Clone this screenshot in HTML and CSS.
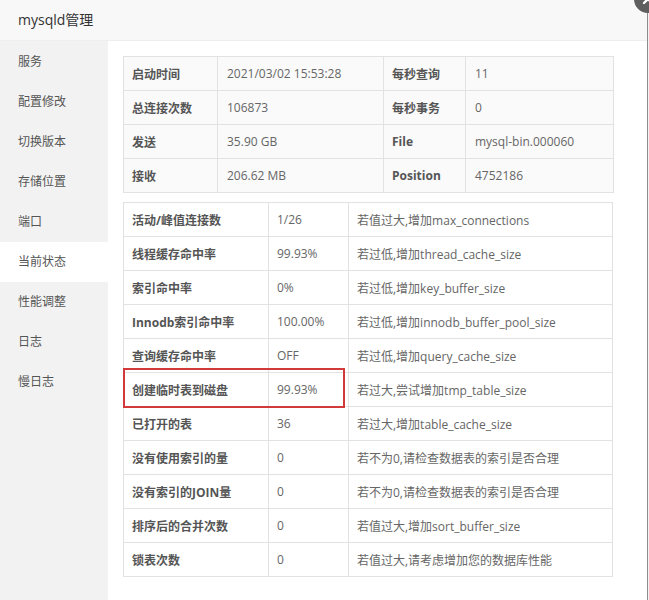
FILE: index.html
```html
<!DOCTYPE html>
<html>
<head>
<meta charset="utf-8">
<link rel="stylesheet" href="styles.css">
</head>
<body>
<div class="dialog">
  <div class="header">mysqld管理</div>
  <div class="close"><svg width="28" height="28" viewBox="0 0 28 28"><circle cx="14" cy="14" r="14" fill="#5f5f5f"/><path d="M10 10 L18 18 M18 10 L10 18" stroke="#fff" stroke-width="2.4" stroke-linecap="round"/></svg></div>
  <div class="main">
    <ul class="side">
      <li>服务</li>
      <li>配置修改</li>
      <li>切换版本</li>
      <li>存储位置</li>
      <li>端口</li>
      <li class="active">当前状态</li>
      <li>性能调整</li>
      <li>日志</li>
      <li>慢日志</li>
    </ul>
    <div class="content">
      <table class="t1">
        <colgroup><col class="c1"><col class="c2"><col class="c3"><col class="c4"></colgroup>
        <tr><th>启动时间</th><td>2021/03/02 15:53:28</td><th>每秒查询</th><td>11</td></tr>
        <tr><th>总连接次数</th><td>106873</td><th>每秒事务</th><td>0</td></tr>
        <tr><th>发送</th><td>35.90 GB</td><th>File</th><td>mysql-bin.000060</td></tr>
        <tr><th>接收</th><td>206.62 MB</td><th>Position</th><td>4752186</td></tr>
      </table>
      <div class="t2wrap">
        <table class="t2">
          <colgroup><col class="d1"><col class="d2"><col class="d3"></colgroup>
          <tr><th>活动/峰值连接数</th><td>1/26</td><td>若值过大,增加max_connections</td></tr>
          <tr><th>线程缓存命中率</th><td>99.93%</td><td>若过低,增加thread_cache_size</td></tr>
          <tr><th>索引命中率</th><td>0%</td><td>若过低,增加key_buffer_size</td></tr>
          <tr><th>Innodb索引命中率</th><td>100.00%</td><td>若过低,增加innodb_buffer_pool_size</td></tr>
          <tr><th>查询缓存命中率</th><td>OFF</td><td>若过低,增加query_cache_size</td></tr>
          <tr><th>创建临时表到磁盘</th><td>99.93%</td><td>若过大,尝试增加tmp_table_size</td></tr>
          <tr><th>已打开的表</th><td>36</td><td>若过大,增加table_cache_size</td></tr>
          <tr><th>没有使用索引的量</th><td>0</td><td>若不为0,请检查数据表的索引是否合理</td></tr>
          <tr><th>没有索引的JOIN量</th><td>0</td><td>若不为0,请检查数据表的索引是否合理</td></tr>
          <tr><th>排序后的合并次数</th><td>0</td><td>若值过大,增加sort_buffer_size</td></tr>
          <tr><th>锁表次数</th><td>0</td><td>若值过大,请考虑增加您的数据库性能</td></tr>
        </table>
        <div class="mark"></div>
      </div>
    </div>
  </div>
</div>
</body>
</html>
```
FILE: styles.css
```css
html, body {
  margin: 0;
  padding: 0;
  background: #f3f3f3;
  overflow: hidden;
}
body {
  font-family: "Open Sans", "Noto Sans CJK SC", sans-serif;
  font-size: 12px;
  color: #555;
}
.dialog {
  position: relative;
  width: 647px;
  height: 600px;
  background: #fff;
  border-right: 1px solid #8c8c8c;
}
.header {
  height: 40px;
  line-height: 40px;
  padding-left: 18px;
  font-size: 14px;
  color: #333;
  background: #f8f8f8;
  border-bottom: 1px solid #eee;
}
.close {
  position: absolute;
  top: -15px;
  right: -15px;
  width: 28px;
  height: 28px;
}
.close svg { display: block; }
.main {
  display: flex;
  height: 559px;
}
.side {
  list-style: none;
  margin: 0;
  padding: 1px 0 0;
  width: 108px;
  background: #f2f2f2;
}
.side li {
  height: 40px;
  line-height: 40px;
  padding-left: 18px;
  color: #555;
}
.side li.active {
  background: #fff;
}
.content {
  flex: 1;
  padding: 15px 0 0 15px;
}
table {
  border-collapse: collapse;
  width: 490px;
  table-layout: fixed;
}
th, td {
  border: 1px solid #e2e2e2;
  height: 33px;
  padding: 0 8px;
  text-align: left;
  white-space: nowrap;
  color: #666;
  font-weight: normal;
}
th {
  font-weight: bold;
  color: #555;
}
.t1 { background: #fafafa; }
.t1 td { padding-left: 9px; }
.c1 { width: 94px; }
.c2 { width: 166px; }
.c3 { width: 82px; }
.c4 { width: 148px; }
.t2wrap {
  position: relative;
  margin-top: 9px;
  width: 490px;
}
.t2 { width: 489px; }
.d1 { width: 145px; }
.d2 { width: 80px; }
.d3 { width: 264px; }
.mark {
  position: absolute;
  left: 0;
  top: 166px;
  width: 222px;
  height: 40px;
  box-sizing: border-box;
  border: 2px solid #d23a3a;
}
```
